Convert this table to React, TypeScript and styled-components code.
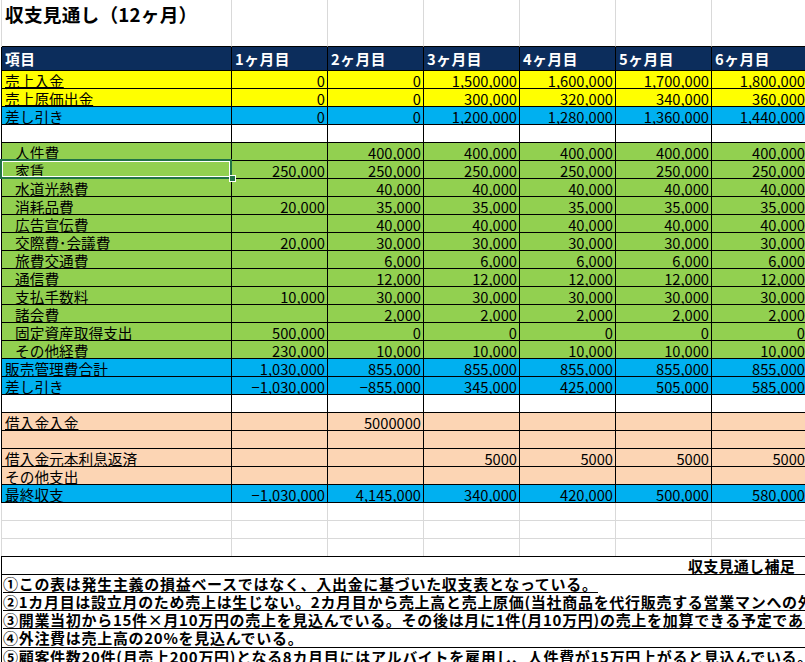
import React from 'react';
import styled, { createGlobalStyle } from 'styled-components';

const GlobalStyle = createGlobalStyle`
  html, body { margin: 0; padding: 0; background: #fff; overflow: hidden; }
  body { font-family: "Noto Sans CJK JP", "Noto Sans", sans-serif; color: #000; }
`;

type Variant = 'plain' | 'header' | 'yellow' | 'blue' | 'green' | 'peach' | 'white';

const fills: Record<Variant, string> = {
  plain: '#ffffff',
  header: '#0C2D5C',
  yellow: '#FFFF00',
  blue: '#00B0F0',
  green: '#92D050',
  peach: '#FCD5B4',
  white: '#ffffff',
};

const GRID = '#d9d9d9';
const INK = '#000000';

const Sheet = styled.div`
  width: 808px;
  height: 662px;
  overflow: hidden;
  display: flex;
  flex-direction: column;
`;

const Row = styled.div<{ $variant: Variant; $h: number; $bottom?: string; $noBottom?: boolean }>`
  display: grid;
  grid-template-columns: 230px repeat(6, 96px);
  height: ${(p) => p.$h}px;
  margin-left: 1px;
  border-left: 1px solid ${(p) => (p.$variant === 'plain' ? GRID : INK)};
  background: ${(p) => fills[p.$variant]};
  flex-shrink: 0;
  & > * {
    box-sizing: border-box;
    border-right: 1px solid ${(p) => (p.$variant === 'plain' ? GRID : INK)};
    border-bottom: ${(p) =>
      p.$noBottom ? 'none' : `1px solid ${p.$bottom ?? (p.$variant === 'plain' ? GRID : INK)}`};
  }
`;

const TitleCell = styled.div`
  display: flex;
  align-items: center;
  padding: 0 0 3px 3px;
  font-size: 18.7px;
  font-weight: 700;
  white-space: nowrap;
  letter-spacing: 0.2px;
`;

const Empty = styled.div``;

const HeadCell = styled.div`
  display: flex;
  align-items: center;
  padding-left: 3px;
  color: #fff;
  font-size: 14.7px;
  font-weight: 700;
  letter-spacing: 0.6px;
  white-space: nowrap;
`;

const LabelCell = styled.div<{ $indent?: boolean; $underline?: boolean }>`
  position: relative;
  display: flex;
  align-items: center;
  padding-left: ${(p) => (p.$indent ? 13 : 3)}px;
  padding-top: 2px;
  font-size: 14.7px;
  line-height: 15px;
  white-space: nowrap;
  text-decoration: ${(p) => (p.$underline ? 'underline' : 'none')};
  text-underline-offset: 0px;
  text-decoration-thickness: 1px;
`;

const NumCell = styled.div`
  display: flex;
  align-items: center;
  justify-content: flex-end;
  padding-right: 2px;
  padding-top: 2px;
  font-size: 14.7px;
  line-height: 15px;
  white-space: nowrap;
  overflow: visible;
`;

const Selection = styled.div`
  position: absolute;
  top: -2px;
  left: -2px;
  width: 232px;
  height: 20px;
  box-sizing: border-box;
  border: 2px solid #217346;
  box-shadow: inset 0 0 0 1px #ffffff;
  z-index: 2;
  pointer-events: none;
`;

const Handle = styled.div`
  position: absolute;
  left: 227px;
  top: 14px;
  width: 7px;
  height: 7px;
  box-sizing: border-box;
  background: #217346;
  border: 1px solid #ffffff;
`;

const Notes = styled.section`
  margin-left: 1px;
  width: 807px;
  border-left: 1px solid ${INK};
  border-top: 1px solid ${INK};
  flex-shrink: 0;
`;

const NotesTitle = styled.div`
  height: 18px;
  box-sizing: border-box;
  border-bottom: 1px solid ${INK};
  display: flex;
  align-items: center;
  justify-content: flex-end;
  padding-right: 14px;
  font-size: 15px;
  font-weight: 700;
  letter-spacing: 0.3px;
`;

const NoteLine = styled.div<{ $h: number; $border?: boolean }>`
  height: ${(p) => p.$h}px;
  box-sizing: border-box;
  display: flex;
  align-items: flex-end;
  padding-left: 1px;
  overflow: hidden;
  white-space: nowrap;
  border-bottom: ${(p) => (p.$border ? `1px solid ${INK}` : 'none')};
`;

const NoteText = styled.span<{ $underline?: boolean }>`
  display: inline-block;
  font-size: 15px;
  font-weight: 700;
  line-height: 16px;
  letter-spacing: 0.7px;
  border-bottom: 1px solid ${(p) => (p.$underline ? INK : 'transparent')};
`;

type DataRow = {
  label: string;
  variant: Variant;
  values: string[];
  indent?: boolean;
  underline?: boolean;
  selected?: boolean;
};

const e = ['', '', '', '', '', ''];

const rows: DataRow[] = [
  { label: '売上入金', variant: 'yellow', underline: true, values: ['0', '0', '1,500,000', '1,600,000', '1,700,000', '1,800,000'] },
  { label: '売上原価出金', variant: 'yellow', underline: true, values: ['0', '0', '300,000', '320,000', '340,000', '360,000'] },
  { label: '差し引き', variant: 'blue', values: ['0', '0', '1,200,000', '1,280,000', '1,360,000', '1,440,000'] },
  { label: '', variant: 'white', values: e },
  { label: '人件費', variant: 'green', indent: true, values: ['', '400,000', '400,000', '400,000', '400,000', '400,000'] },
  { label: '家賃', variant: 'green', indent: true, selected: true, values: ['250,000', '250,000', '250,000', '250,000', '250,000', '250,000'] },
  { label: '水道光熱費', variant: 'green', indent: true, values: ['', '40,000', '40,000', '40,000', '40,000', '40,000'] },
  { label: '消耗品費', variant: 'green', indent: true, values: ['20,000', '35,000', '35,000', '35,000', '35,000', '35,000'] },
  { label: '広告宣伝費', variant: 'green', indent: true, values: ['', '40,000', '40,000', '40,000', '40,000', '40,000'] },
  { label: '交際費･会議費', variant: 'green', indent: true, values: ['20,000', '30,000', '30,000', '30,000', '30,000', '30,000'] },
  { label: '旅費交通費', variant: 'green', indent: true, values: ['', '6,000', '6,000', '6,000', '6,000', '6,000'] },
  { label: '通信費', variant: 'green', indent: true, values: ['', '12,000', '12,000', '12,000', '12,000', '12,000'] },
  { label: '支払手数料', variant: 'green', indent: true, values: ['10,000', '30,000', '30,000', '30,000', '30,000', '30,000'] },
  { label: '諸会費', variant: 'green', indent: true, values: ['', '2,000', '2,000', '2,000', '2,000', '2,000'] },
  { label: '固定資産取得支出', variant: 'green', indent: true, values: ['500,000', '0', '0', '0', '0', '0'] },
  { label: 'その他経費', variant: 'green', indent: true, values: ['230,000', '10,000', '10,000', '10,000', '10,000', '10,000'] },
  { label: '販売管理費合計', variant: 'blue', values: ['1,030,000', '855,000', '855,000', '855,000', '855,000', '855,000'] },
  { label: '差し引き', variant: 'blue', values: ['−1,030,000', '−855,000', '345,000', '425,000', '505,000', '585,000'] },
  { label: '', variant: 'white', values: e },
  { label: '借入金入金', variant: 'peach', underline: true, values: ['', '5000000', '', '', '', ''] },
  { label: '', variant: 'peach', values: e },
  { label: '借入金元本利息返済', variant: 'peach', values: ['', '', '5000', '5000', '5000', '5000'] },
  { label: 'その他支出', variant: 'peach', values: e },
  { label: '最終収支', variant: 'blue', values: ['−1,030,000', '4,145,000', '340,000', '420,000', '500,000', '580,000'] },
];

const months = ['1ヶ月目', '2ヶ月目', '3ヶ月目', '4ヶ月目', '5ヶ月目', '6ヶ月目'];

const notes = [
  '①この表は発生主義の損益ベースではなく、入出金に基づいた収支表となっている。',
  '②1カ月目は設立月のため売上は生じない。2カ月目から売上高と売上原価(当社商品を代行販売する営業マンへの外注費)が発生する。',
  '③開業当初から15件×月10万円の売上を見込んでいる。その後は月に1件(月10万円)の売上を加算できる予定である。',
  '④外注費は売上高の20%を見込んでいる。',
  '⑤顧客件数20件(月売上200万円)となる8カ月目にはアルバイトを雇用し、人件費が15万円上がると見込んでいる。',
];

const blanks = [0, 1, 2, 3, 4, 5];

export default function App() {
  return (
    <>
      <GlobalStyle />
      <Sheet>
        <Row $variant="plain" $h={29}>
          <TitleCell>収支見通し（12ヶ月）</TitleCell>
          {blanks.map((i) => (
            <Empty key={i} />
          ))}
        </Row>
        <Row $variant="plain" $h={18} $bottom={INK}>
          <Empty />
          {blanks.map((i) => (
            <Empty key={i} />
          ))}
        </Row>
        <Row $variant="header" $h={24}>
          <HeadCell>項目</HeadCell>
          {months.map((m) => (
            <HeadCell key={m}>{m}</HeadCell>
          ))}
        </Row>
        {rows.map((r, idx) => (
          <Row key={idx} $variant={r.variant} $h={18}>
            <LabelCell $indent={r.indent} $underline={r.underline}>
              {r.label}
              {r.selected && (
                <Selection>
                  <Handle />
                </Selection>
              )}
            </LabelCell>
            {r.values.map((v, i) => (
              <NumCell key={i}>{v}</NumCell>
            ))}
          </Row>
        ))}
        <Row $variant="plain" $h={18}>
          <Empty />
          {blanks.map((i) => (
            <Empty key={i} />
          ))}
        </Row>
        <Row $variant="plain" $h={18}>
          <Empty />
          {blanks.map((i) => (
            <Empty key={i} />
          ))}
        </Row>
        <Row $variant="plain" $h={17} $noBottom>
          <Empty />
          {blanks.map((i) => (
            <Empty key={i} />
          ))}
        </Row>
        <Notes>
          <NotesTitle>収支見通し補足</NotesTitle>
          {notes.map((n, i) => (
            <NoteLine key={i} $h={i === 3 ? 19 : 18} $border={i === 3}>
              <NoteText $underline={i < 3}>{n}</NoteText>
            </NoteLine>
          ))}
        </Notes>
      </Sheet>
    </>
  );
}
